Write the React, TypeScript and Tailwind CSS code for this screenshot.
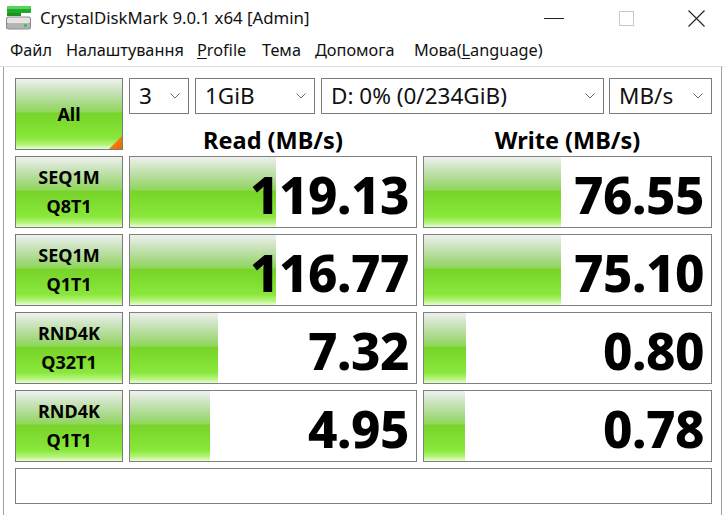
import React from "react";

const GREEN =
  "bg-[linear-gradient(to_bottom,#eef0ee_0%,#c8e3b9_18%,#a2d87c_38%,#8fd85a_47%,#78d42a_49%,#7fdc30_65%,#8ae83c_85%,#b6f47c_94%,#e8fcd8_100%)]";

const rows = [
  { l1: "SEQ1M", l2: "Q8T1", r: "119.13", rw: 146, w: "76.55", ww: 137 },
  { l1: "SEQ1M", l2: "Q1T1", r: "116.77", rw: 146, w: "75.10", ww: 137 },
  { l1: "RND4K", l2: "Q32T1", r: "7.32", rw: 88, w: "0.80", ww: 42 },
  { l1: "RND4K", l2: "Q1T1", r: "4.95", rw: 80, w: "0.78", ww: 41 },
];

function Chevron() {
  return (
    <svg width="10" height="6" viewBox="0 0 10 6" className="shrink-0">
      <path d="M0.5 0.5 L5 5 L9.5 0.5" fill="none" stroke="#6b6b6b" strokeWidth="1" />
    </svg>
  );
}

function Select({ text, w, ml }: { text: string; w: string; ml: string }) {
  return (
    <div
      className={`${w} ${ml} h-[36px] border border-[#7a7a7a] bg-white flex items-center justify-between pl-[9px] pr-[8px] text-[22.5px] text-[#111] leading-none`}
    >
      <span>{text}</span>
      <Chevron />
    </div>
  );
}

function Cell({ value, bar, w }: { value: string; bar: number; w: string }) {
  return (
    <div className={`${w} ml-[6px] h-[72px] border border-[#808080] bg-white relative`}>
      <div className={`absolute left-0 top-0 bottom-0 ${GREEN}`} style={{ width: bar }} />
      <div className="relative h-full flex items-center justify-end pr-[7px] pt-[5px] text-[51px] font-extrabold leading-none text-black tracking-[-0.5px]">
        {value}
      </div>
    </div>
  );
}

function AppIcon() {
  return (
    <svg width="27" height="27" viewBox="0 0 27 27" className="shrink-0">
      <rect x="2" y="2" width="24" height="7" rx="1" fill="#22a82a" />
      <rect x="2" y="2" width="24" height="3" rx="1" fill="#58d45a" />
      <rect x="2" y="9" width="14" height="3" fill="#1e8f24" />
      <rect x="1" y="12.5" width="25" height="13" rx="2.5" fill="#8c8c8c" />
      <rect x="2" y="13.5" width="23" height="6" rx="1.5" fill="#e4e4e4" />
      <rect x="2" y="19.5" width="23" height="5" rx="1.5" fill="#b4b4b4" />
      <circle cx="20.5" cy="21.5" r="1.8" fill="#3cc83c" />
    </svg>
  );
}

export default function App() {
  return (
    <div className="w-[724px] h-[515px] bg-white overflow-hidden font-['Noto_Sans','Open_Sans',sans-serif] text-black">
      {/* Title bar */}
      <div className="h-[36px] flex items-center relative">
        <div className="ml-[5px] mt-[-1px]">
          <AppIcon />
        </div>
        <div className="ml-[8px] text-[16.8px] text-[#111] leading-none">
          CrystalDiskMark 9.0.1 x64 [Admin]
        </div>
        <div className="ml-auto flex items-center h-full">
          <div className="w-[46px] h-full flex items-center justify-center">
            <div className="w-[20px] h-px bg-[#222]" />
          </div>
          <div className="w-[46px] ml-[26px] h-full flex items-center justify-center">
            <div className="w-[15px] h-[15px] border border-[#c8c8c8]" />
          </div>
          <div className="w-[46px] ml-[24px] mr-[5px] h-full flex items-center justify-center">
            <svg width="17" height="17" viewBox="0 0 17 17">
              <path d="M0.5 0.5 L16.5 16.5 M16.5 0.5 L0.5 16.5" stroke="#222" strokeWidth="1.1" />
            </svg>
          </div>
        </div>
      </div>

      {/* Menu bar */}
      <div className="h-[31px] flex items-center border-b border-[#dcdcdc] text-[16.3px] text-[#111] leading-none pb-[2px]">
        <span className="ml-[10px] w-[56px]">Файл</span>
        <span className="w-[131px]">Налаштування</span>
        <span className="w-[65px]">
          <u className="underline-offset-2">P</u>rofile
        </span>
        <span className="w-[53px]">Тема</span>
        <span className="w-[99px]">Допомога</span>
        <span>
          Мова(<u className="underline-offset-2">L</u>anguage)
        </span>
      </div>

      {/* Main */}
      <div className="ml-[3px] w-[719px] h-[448px] border-l border-r border-[#a0a0a0] pl-[11px] pt-[11px]">
        <div className="flex">
          <div
            className={`w-[108px] h-[72px] border border-[#7a7a7a] ${GREEN} relative flex items-center justify-center text-[18px] font-bold`}
          >
            All
            <svg width="13" height="13" viewBox="0 0 13 13" className="absolute right-0 bottom-0">
              <defs>
                <linearGradient id="og" x1="0" y1="0" x2="1" y2="1">
                  <stop offset="0" stopColor="#ff8a1c" />
                  <stop offset="1" stopColor="#ea6a00" />
                </linearGradient>
              </defs>
              <polygon points="13,0 13,13 0,13" fill="url(#og)" />
            </svg>
          </div>
          <div className="flex flex-col">
            <div className="flex">
              <Select text="3" w="w-[60px]" ml="ml-[6px]" />
              <Select text="1GiB" w="w-[120px]" ml="ml-[6px]" />
              <Select text="D: 0% (0/234GiB)" w="w-[283px]" ml="ml-[6px]" />
              <Select text="MB/s" w="w-[103px]" ml="ml-[5px]" />
            </div>
            <div className="flex h-[36px] items-end text-[23.5px] font-bold leading-none translate-y-[2px]">
              <div className="w-[288px] ml-[6px] text-center">Read (MB/s)</div>
              <div className="w-[289px] ml-[6px] text-center">Write (MB/s)</div>
            </div>
          </div>
        </div>

        <div className="flex flex-col gap-[6px] mt-[6px]">
          {rows.map((r) => (
            <div key={r.l1 + r.l2} className="flex">
              <div
                className={`w-[108px] h-[72px] border border-[#7a7a7a] ${GREEN} flex flex-col items-center justify-center text-[18px] font-bold leading-[29px]`}
              >
                <span>{r.l1}</span>
                <span>{r.l2}</span>
              </div>
              <Cell value={r.r} bar={r.rw} w="w-[288px]" />
              <Cell value={r.w} bar={r.ww} w="w-[289px]" />
            </div>
          ))}
          <div className="w-[697px] h-[36px] border border-[#808080] bg-white" />
        </div>
      </div>
    </div>
  );
}
